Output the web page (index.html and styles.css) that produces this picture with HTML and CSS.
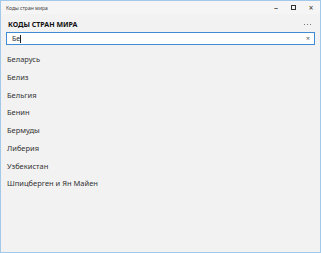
FILE: index.html
```html
<!DOCTYPE html>
<html lang="ru">
<head>
    <meta charset="UTF-8">
    <title>Коды стран мира</title>
    <link rel="stylesheet" href="styles.css">
</head>
<body>
    <div class="window">
        <div class="titlebar">
            <span class="title">Коды стран мира</span>
            <div class="controls">
                <span class="ctl">&#8211;</span>
                <span class="ctl max"></span>
                <span class="ctl">&#215;</span>
            </div>
        </div>

        <div class="header">
            <h1>КОДЫ СТРАН МИРА</h1>
            <span class="more"><i></i><i></i><i></i></span>
        </div>

        <!-- Search -->
        <div class="search">
            <span class="query">Бе<span class="caret"></span></span>
            <span class="clear">&#215;</span>
        </div>

        <!-- Country list -->
        <div class="list">
            <div class="item">Беларусь</div>
            <div class="item">Белиз</div>
            <div class="item">Бельгия</div>
            <div class="item">Бенин</div>
            <div class="item">Бермуды</div>
            <div class="item">Либерия</div>
            <div class="item">Узбекистан</div>
            <div class="item">Шпицберген и Ян Майен</div>
        </div>
    </div>
</body>
</html>
```

FILE: styles.css
```css
html, body {
    margin: 0;
    height: 100%;
}

body {
    font-family: "Noto Sans", "Open Sans", sans-serif;
    color: #222222;
}

.window {
    box-sizing: border-box;
    height: 253px;
    border: 1px solid #a3c9ea;
    background-color: #f2f2f2;
    display: flex;
    flex-direction: column;
}

.titlebar {
    height: 13px;
    display: flex;
    align-items: center;
    justify-content: space-between;
    background-color: #f5f5f5;
}

.title {
    font-size: 5px;
    color: #444444;
    padding-left: 5px;
}

.controls {
    display: flex;
    align-items: center;
}

.ctl {
    width: 18px;
    text-align: center;
    font-size: 8px;
    color: #333333;
    line-height: 8px;
}

.ctl.max {
    box-sizing: border-box;
    width: 5px;
    height: 5px;
    border: 1px solid #333333;
    margin: 0 6px;
}

.header {
    display: flex;
    justify-content: space-between;
    align-items: center;
    padding: 3px 9px 0 7px;
    height: 15px;
}

h1 {
    margin: 0;
    font-size: 7px;
    font-weight: bold;
    color: #111111;
}

.more {
    display: flex;
    gap: 2px;
}

.more i {
    width: 1px;
    height: 1px;
    background-color: #777777;
}

.search {
    margin: 0 5px;
    height: 13px;
    box-sizing: border-box;
    border: 1px solid #3f8cd4;
    background-color: #ffffff;
    display: flex;
    align-items: center;
    justify-content: space-between;
    padding: 0 4px 0 5px;
}

.query {
    font-size: 7px;
    color: #333333;
    display: flex;
    align-items: center;
}

.caret {
    width: 1px;
    height: 8px;
    background-color: #222222;
}

.clear {
    font-size: 7px;
    color: #555555;
}

.list {
    padding: 6px 0 0 6px;
}

.item {
    height: 17.75px;
    font-size: 7.5px;
    line-height: 17.75px;
    color: #333333;
}
```
